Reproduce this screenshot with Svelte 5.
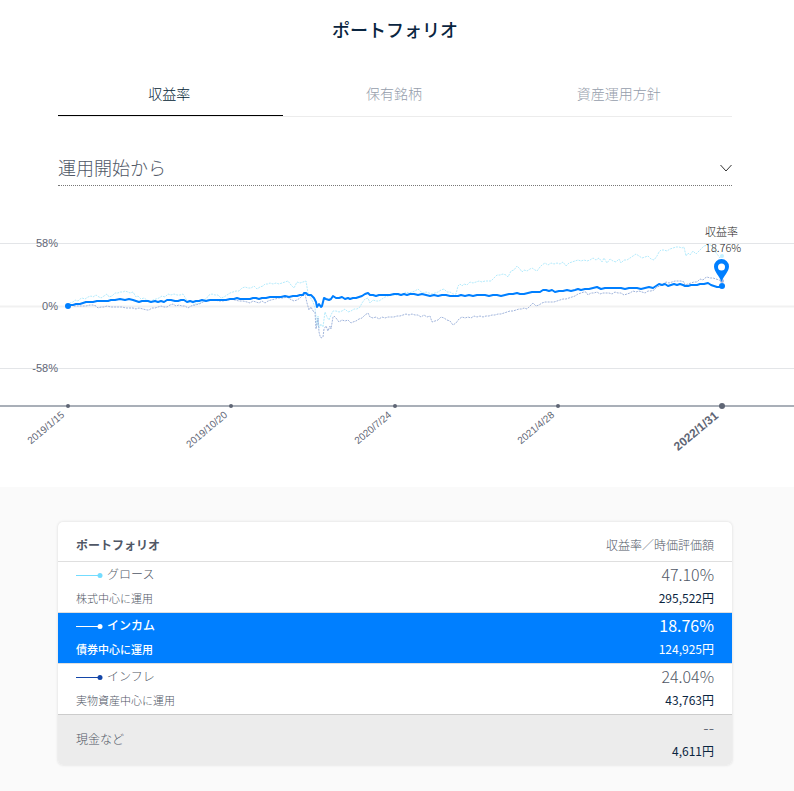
<script lang="ts">
	const tabs = ['収益率', '保有銘柄', '資産運用方針'];
	let activeTab = $state(0);
	let selected = $state('income');
	let period = $state('運用開始から');

	const rows = [
		{ id: 'growth', name: 'グロース', note: '株式中心に運用', rate: '47.10%', amount: '295,522円', color: '#73dcff' },
		{ id: 'income', name: 'インカム', note: '債券中心に運用', rate: '18.76%', amount: '124,925円', color: '#007fff' },
		{ id: 'inflation', name: 'インフレ', note: '実物資産中心に運用', rate: '24.04%', amount: '43,763円', color: '#1446a8' }
	];

	const grid = [
		{ y: 23, label: '58%' },
		{ y: 86, label: '0%' },
		{ y: 148, label: '-58%' }
	];

	const dates = [
		{ x: 68, label: '2019/1/15' },
		{ x: 231, label: '2019/10/20' },
		{ x: 395, label: '2020/7/24' },
		{ x: 558, label: '2021/4/28' },
		{ x: 722, label: '2022/1/31', current: true }
	];

	const growth =
		'68,86 70,83 73,82 75,80 78,81 80,79 82,78 85,79 88,77 91,76 93,77 96,75 99,77 101,78 104,76 107,74 109,77 112,76 115,73 118,73 120,72 123,72 125,71 128,72 130,73 133,72 136,77 138,76 141,79 144,78 147,80 150,82 153,80 156,79 159,78 162,76 165,77 168,74 171,75 174,74 177,75 180,75 183,74 186,79 188,83 191,81 194,85 197,83 200,84 203,80 206,79 209,75 212,74 215,75 218,75 221,78 224,77 227,75 230,73 233,72 236,71 239,71 242,68 245,67 248,68 251,68 254,66 257,69 260,67 263,66 265,64 268,64 270,63 273,64 276,63 279,64 282,63 285,62 288,61 291,65 294,68 297,62 300,63 303,62 306,61 308,73 310,77 313,82 315,88 317,106 318,96 319,108 321,104 323,107 325,92 327,97 329,100 331,95 333,91 336,91 339,92 342,91 345,89 348,92 351,91 354,89 357,89 360,87 362,83 365,79 368,78 370,83 373,80 376,81 379,81 382,79 385,77 388,76 391,75 394,75 397,75 400,75 403,74 406,72 409,73 412,72 415,71 418,69 420,71 423,73 426,72 429,73 432,74 435,73 438,72 441,70 444,69 447,72 450,72 453,74 456,74 458,66 460,64 462,66 464,64 467,65 470,62 473,63 476,62 479,61 482,62 485,61 488,61 491,61 494,58 497,55 500,55 503,54 506,55 508,57 511,51 514,50 517,46 520,49 522,52 524,50 527,51 530,49 532,48 535,50 537,51 540,47 542,45 545,43 548,45 551,43 554,44 557,43 560,44 563,42 566,46 569,43 572,42 575,41 578,40 581,41 584,40 587,41 590,40 593,38 596,40 599,38 602,42 604,38 607,43 610,39 613,41 616,42 619,39 621,43 624,40 627,40 630,38 633,36 636,34 639,36 642,38 645,37 648,36 651,39 654,40 657,36 659,32 661,30 664,30 667,31 670,29 673,28 676,27 679,27 682,28 684,27 686,36 688,33 690,35 693,31 696,34 699,31 701,29 704,26 708,25 711,25 714,30 717,34 720,38 722,36';
	const inflation =
		'68,86 71,85 74,86 78,86 82,86 86,86 90,85 93,85 96,86 98,88 101,87 104,87 107,86 111,87 114,87 118,87 122,87 126,88 130,88 133,88 136,89 139,88 143,89 147,90 149,90 152,88 155,88 158,87 161,86 164,87 167,87 170,85 173,84 176,86 179,85 182,86 185,86 188,88 191,86 195,85 199,84 203,82 207,80 211,80 215,80 219,81 223,81 227,80 231,79 235,80 239,81 243,81 247,82 250,83 253,81 256,82 259,83 262,81 265,83 268,81 271,80 275,79 279,78 283,78 287,77 290,79 294,81 297,80 300,78 303,75 305,74 307,83 309,90 311,87 313,91 315,92 316,109 318,98 319,112 320,116 321,118 323,117 324,109 326,106 328,111 330,106 331,109 333,97 334,96 336,98 339,102 342,100 345,101 348,100 351,103 353,102 356,101 359,99 362,98 365,95 368,93 370,97 373,98 376,97 379,99 382,97 385,98 388,97 391,97 394,97 397,96 400,96 403,95 406,94 409,95 412,94 415,95 418,95 421,97 424,95 427,97 430,96 432,102 435,101 438,100 441,97 444,98 447,100 450,101 453,105 456,103 459,99 462,97 465,98 468,97 471,98 474,96 477,97 480,96 483,97 486,96 489,96 492,95 495,95 498,94 501,94 504,93 507,92 510,91 513,91 516,90 519,89 522,89 524,88 527,89 530,86 533,83 536,86 539,85 542,83 545,82 548,82 551,82 554,82 557,81 560,80 563,79 566,79 569,78 572,77 575,76 578,74 581,73 584,72 586,72 588,75 591,73 594,73 597,72 600,74 603,73 606,73 609,73 612,74 615,72 618,73 621,73 624,75 627,74 630,73 633,71 636,72 639,71 642,72 645,73 648,71 651,71 654,70 657,67 660,66 663,64 666,62 669,63 672,62 675,61 678,61 681,61 684,62 685,65 688,64 691,63 694,62 697,62 700,59 703,60 705,58 707,57 710,58 713,58 716,59 719,60 722,61';
	const income =
		'68,86 70,85 73,85 76,84 80,84 83,83 86,82 90,82 93,82 97,81 100,81 104,81 108,81 111,80 115,80 120,79 125,80 129,79 133,80 136,81 139,82 142,81 145,81 148,81 151,82 155,81 158,82 161,81 164,82 167,80 171,80 175,81 178,81 181,80 184,80 187,82 190,81 193,82 196,81 199,81 202,80 206,81 210,80 214,80 218,80 222,80 226,80 230,79 234,79 237,78 240,79 243,79 246,79 250,79 253,78 256,78 259,79 262,78 266,78 270,77 273,77 277,77 281,77 285,76 289,77 293,76 297,76 300,75 303,75 304,73 306,73 308,75 311,75 314,78 316,82 317,87 319,84 321,87 322,86 324,78 326,79 329,80 331,79 333,76 336,78 339,78 342,77 345,79 348,78 350,79 353,78 356,78 359,77 362,76 365,74 368,73 370,75 373,75 376,76 379,75 382,75 386,75 390,75 394,74 398,74 401,75 404,74 407,75 410,74 414,74 418,75 422,74 426,75 430,76 434,75 438,76 442,75 446,75 450,76 454,76 458,76 461,75 465,76 469,75 473,76 477,75 481,75 485,75 489,76 493,75 497,75 501,76 505,75 509,74 513,74 517,73 520,74 524,74 528,73 532,72 536,72 540,72 543,70 546,70 549,71 552,70 555,72 559,71 563,71 567,70 571,71 575,70 578,69 581,70 585,69 589,69 593,68 597,67 601,69 605,68 609,68 613,68 617,68 621,68 625,69 629,68 633,68 637,68 641,69 645,68 649,67 653,68 656,66 659,64 662,65 665,64 668,66 671,65 674,64 677,65 680,64 683,65 685,66 688,66 691,65 694,65 697,65 700,64 704,64 708,63 711,65 714,66 717,67 720,67 722,66';
</script>

<main>
	<section class="top">
		<h1>ポートフォリオ</h1>
		<div class="tabs" role="tablist">
			{#each tabs as tab, i}
				<button role="tab" aria-selected={activeTab === i} class:active={activeTab === i} onclick={() => (activeTab = i)}>{tab}</button>
			{/each}
		</div>
		<div class="period">
			<select aria-label="期間" bind:value={period}>
				<option>運用開始から</option>
			</select>
			<svg class="chevron" width="12" height="8" viewBox="0 0 12 8" aria-hidden="true">
				<path d="M0.5 1 L6 7 L11.5 1" />
			</svg>
		</div>
	</section>

	<svg class="chart" viewBox="0 0 794 267">
		{#each grid as line}
			<line class="grid" class:zero={line.label === '0%'} x1="0" x2="794" y1={line.y + 0.5} y2={line.y + 0.5} />
			<text class="y-label" x="58" y={line.y + 4} text-anchor="end">{line.label}</text>
		{/each}

		<polyline class="growth" points={growth} />
		<polyline class="inflation" points={inflation} />
		<polyline class="income" points={income} />

		<circle cx="68" cy="86" r="3" fill="#007fff" />
		<circle cx="722" cy="36" r="2" fill="#c3f0ff" />
		<circle cx="722" cy="61" r="2" fill="#a5b7de" />
		<circle cx="722" cy="66" r="3" fill="#007fff" />
		<path class="pin" d="M721.500 62 C719.500 56 714 51.500 714 46.500 A7.500 7.500 0 0 1 729 46.500 C729 51.500 723.500 56 721.500 62 Z" />
		<circle cx="721.500" cy="47" r="3.500" fill="#fff" />
		<text class="tip" x="705" y="16">収益率</text>
		<text class="tip" x="705" y="32">18.76%</text>

		<line class="axis" x1="0" x2="794" y1="186" y2="186" />
		{#each dates as date}
			<circle cx={date.x} cy="186" r={date.current ? 3 : 2} fill="#5f6675" />
			<text
				class="date"
				class:current={date.current}
				text-anchor="end"
				transform="translate({date.x - 3} {date.current ? 197 : 196}) rotate(-40)">{date.label}</text>
		{/each}
	</svg>

	<section class="detail">
		<div class="card">
			<table>
				<thead>
					<tr>
						<th scope="col">ポートフォリオ</th>
						<th scope="col" class="value-head">収益率／時価評価額</th>
					</tr>
				</thead>
				<tbody>
					{#each rows as row}
						<tr class:selected={selected === row.id} onclick={() => (selected = row.id)}>
							<td>
								<div class="name">
									<svg width="27" height="8" viewBox="0 0 27 8" color={selected === row.id ? '#fff' : row.color} aria-hidden="true">
										<path d="M0 5.500 H24" stroke="currentColor" />
										<circle cx="24" cy="5.500" r="2.500" fill="currentColor" />
									</svg>
									{row.name}
								</div>
								<div class="note">{row.note}</div>
							</td>
							<td class="value">
								<div class="rate">{row.rate}</div>
								<div class="amount">{row.amount}</div>
							</td>
						</tr>
					{/each}
					<tr class="cash">
						<td>現金など</td>
						<td class="value">
							<div class="rate">--</div>
							<div class="amount">4,611円</div>
						</td>
					</tr>
				</tbody>
			</table>
		</div>
	</section>
</main>

<style>
	:global(body) {
		margin: 0;
		background: #fff;
	}
	main {
		font-family: 'Noto Sans CJK JP', sans-serif;
		font-weight: 300;
		color: #505766;
	}
	.top {
		padding: 14px 62px 0 58px;
	}
	h1 {
		margin: 0;
		font-size: 18px;
		line-height: 30px;
		font-weight: 500;
		text-align: center;
		color: #0a2540;
	}
	.tabs {
		display: grid;
		grid-template-columns: repeat(3, 1fr);
		margin-top: 28px;
		border-bottom: 1px solid #ececec;
	}
	.tabs button {
		height: 44px;
		padding: 0 2px 2px 0;
		border: 0;
		border-bottom: 1px solid transparent;
		background: none;
		font-family: inherit;
		font-size: 14px;
		font-weight: 300;
		color: #959dab;
		cursor: pointer;
	}
	.tabs button.active {
		border-bottom-color: #000;
		color: #001a33;
	}
	.period {
		display: flex;
		align-items: center;
		margin-top: 34px;
		border-bottom: 1px dotted #777;
	}
	select {
		flex: 1;
		height: 34px;
		padding: 0 0 2px;
		border: 0;
		appearance: none;
		background: none;
		font-family: inherit;
		font-size: 18px;
		font-weight: 300;
		color: #505766;
	}
	.chevron {
		pointer-events: none;
	}
	.chevron path {
		fill: none;
		stroke: #333;
	}
	.chart {
		display: block;
		width: 100%;
		margin-top: 34px;
	}
	.grid {
		stroke: #e3e5e8;
	}
	.zero {
		stroke: #f1f1f1;
		stroke-width: 2;
	}
	.y-label {
		font: 11px 'Liberation Sans', sans-serif;
		fill: #5f6675;
	}
	polyline {
		fill: none;
		stroke-linejoin: round;
	}
	.growth {
		stroke: #b5ebfc;
		stroke-dasharray: 2 1;
	}
	.inflation {
		stroke: #a1b5dc;
		stroke-dasharray: 2 1;
	}
	.income {
		stroke: #007fff;
		stroke-width: 2;
	}
	.pin {
		fill: #007fff;
	}
	.tip {
		font-size: 11px;
		font-weight: 300;
		fill: #222;
	}
	.axis {
		stroke: #a9afb8;
		stroke-width: 2;
	}
	.date {
		font: 10px 'Liberation Sans', sans-serif;
		fill: #5f6675;
	}
	.date.current {
		font-size: 12px;
		font-weight: 700;
	}
	.detail {
		padding: 35px 62px 26px 58px;
		background: #fafafa;
	}
	.card {
		overflow: hidden;
		border-radius: 5px;
		background: #fff;
		box-shadow: 0 0 3px rgba(0, 0, 0, 0.14);
	}
	table {
		width: 100%;
		border-spacing: 0;
		font-size: 12px;
		line-height: 24px;
	}
	th {
		padding: 11px 18px 4px;
		text-align: left;
		font-weight: 700;
	}
	th.value-head {
		text-align: right;
		font-weight: 300;
	}
	td {
		padding: 0 18px 2px;
		border-top: 1px solid #dfdfdf;
	}
	.name {
		display: flex;
		align-items: center;
		gap: 4px;
	}
	.note {
		font-size: 11px;
	}
	.value {
		text-align: right;
	}
	.rate {
		font-size: 16px;
	}
	.amount {
		font-weight: 400;
		color: #0a2540;
	}
	.selected td {
		background: #007fff;
		color: #fff;
		font-weight: 500;
	}
	.selected .value {
		font-weight: 400;
	}
	.selected .amount {
		color: #fff;
	}
	.cash td {
		border-top-color: #ccc;
		background: #ececec;
	}
</style>
